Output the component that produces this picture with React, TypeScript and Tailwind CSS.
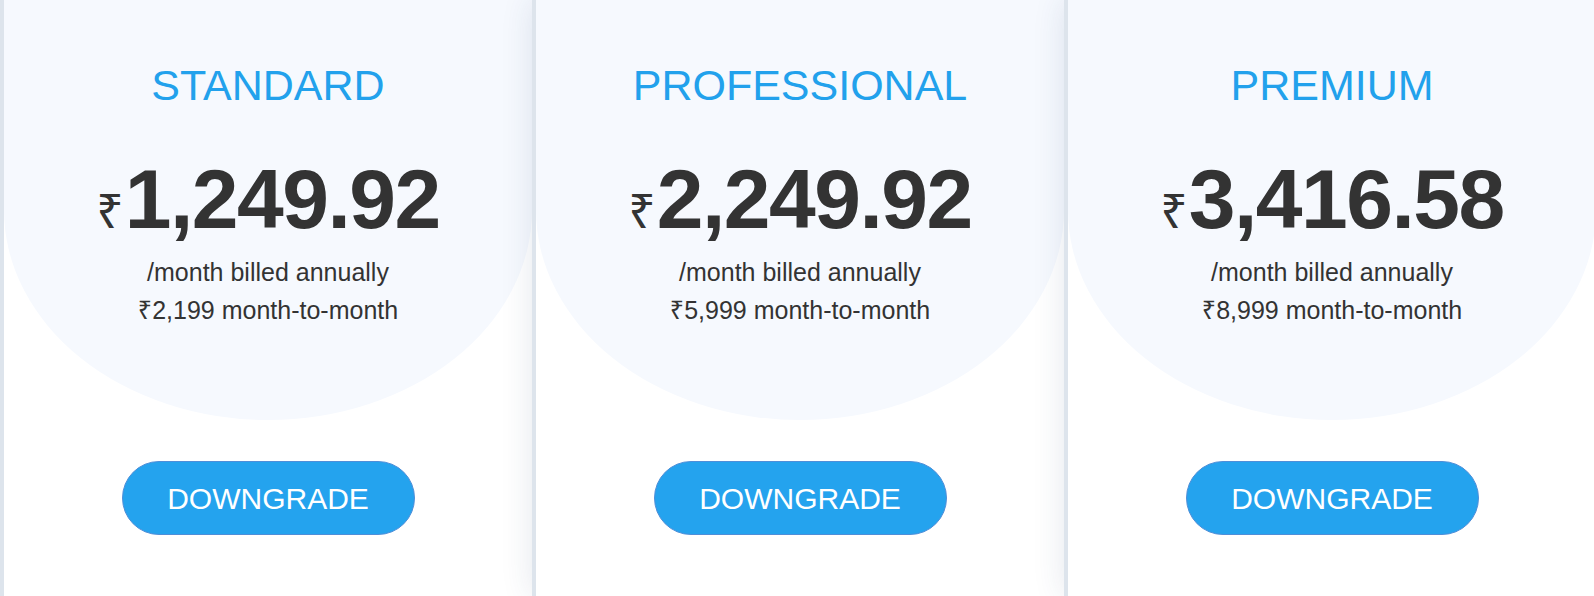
import React from "react";

type Plan = { name: string; price: string; monthly: string };

const plans: Plan[] = [
  { name: "STANDARD", price: "1,249.92", monthly: "₹2,199" },
  { name: "PROFESSIONAL", price: "2,249.92", monthly: "₹5,999" },
  { name: "PREMIUM", price: "3,416.58", monthly: "₹8,999" },
];

const font = { fontFamily: '"Liberation Sans", Arial, "Noto Sans", sans-serif' };

function Card({ plan }: { plan: Plan }) {
  return (
    <div className="flex h-[596px] w-[532px] shrink-0 flex-col border-l-4 border-[#dde4ec] bg-white shadow-[0_0_30px_rgba(30,60,110,0.12)]">
      <div className="flex h-[420px] w-full flex-col items-center rounded-b-[50%] bg-[#f6f9fe] pt-[64px]">
        <div className="text-[43px] leading-[43px] text-[#22a1ec]">{plan.name}</div>
        <div className="mt-[50px] flex items-baseline text-[#333333]">
          <span className="mr-[1px] text-[48px] leading-[84px]" style={{ fontFamily: '"Noto Sans", "DejaVu Sans", sans-serif' }}>
            ₹
          </span>
          <span className="text-[84px] font-bold leading-[84px] tracking-[-1.5px]">{plan.price}</span>
        </div>
        <div className="mt-[1px] text-[25px] leading-[38px] text-[#333333]">/month billed annually</div>
        <div className="text-[25px] leading-[38px] text-[#333333]">{plan.monthly} month-to-month</div>
      </div>
      <div className="mt-[41px] flex justify-center">
        <button className="flex h-[74px] w-[293px] items-center justify-center rounded-full border border-[#4f8ed8] bg-[#24a3ee] text-[30px] text-white">
          DOWNGRADE
        </button>
      </div>
    </div>
  );
}

export default function App() {
  return (
    <div className="flex h-[596px] w-[1594px] overflow-hidden bg-white" style={font}>
      {plans.map((p) => (
        <Card key={p.name} plan={p} />
      ))}
    </div>
  );
}
